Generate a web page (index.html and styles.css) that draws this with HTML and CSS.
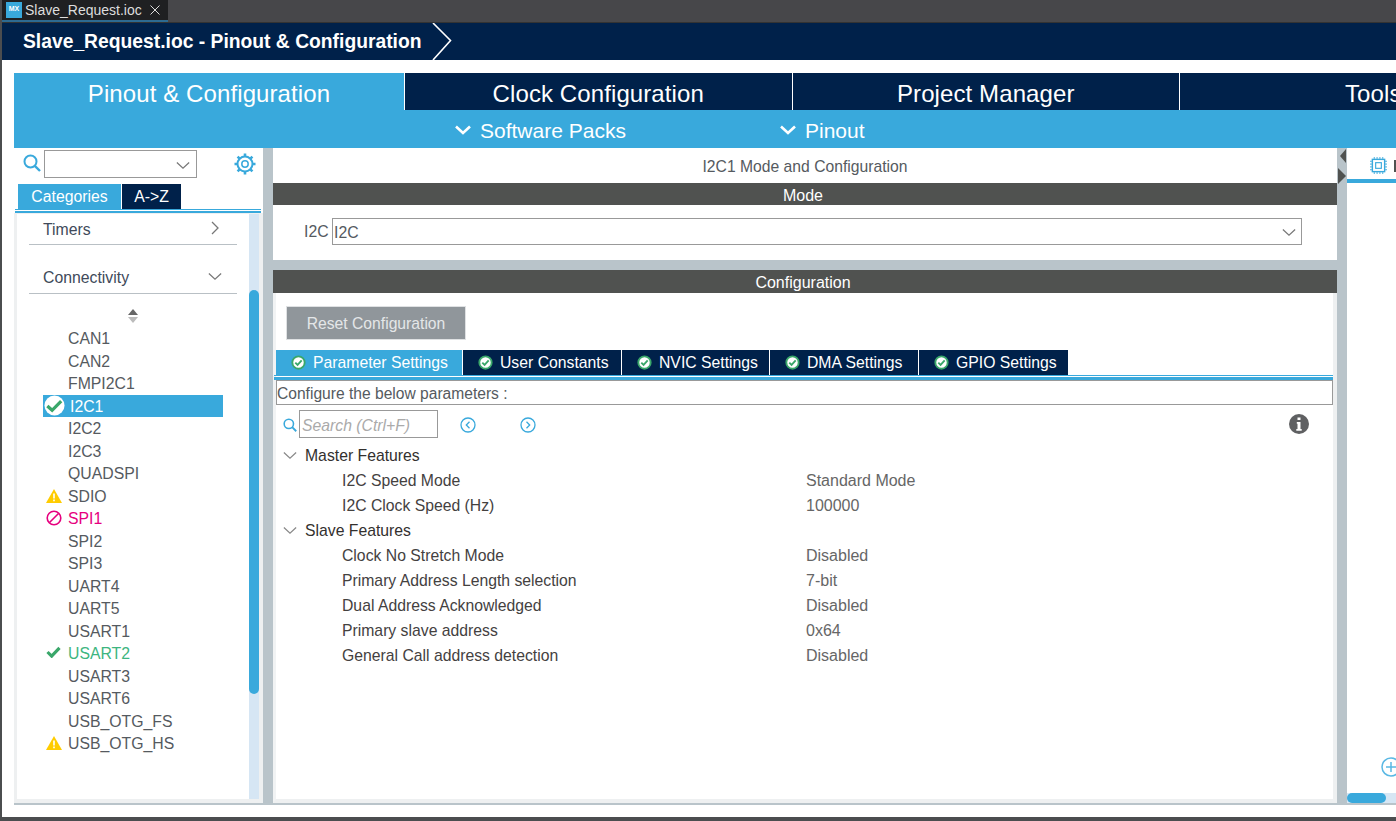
FILE: index.html
```html
<!DOCTYPE html>
<html lang="en">
<head>
    <meta charset="UTF-8">
    <meta name="viewport" content="width=device-width, initial-scale=1.0">
    <title>Slave_Request.ioc - Pinout &amp; Configuration</title>
    <link rel="stylesheet" href="styles.css">
</head>
<body>

    <svg class="defs" width="0" height="0">
        <symbol id="i-ok" viewBox="0 0 16 16">
            <circle cx="8" cy="8" r="6.6" fill="#fff" stroke="#3aa76a" stroke-width="2"/>
            <path d="M4.6 8.2 7 10.6 11.4 5.8" fill="none" stroke="#3aa76a" stroke-width="2"/>
        </symbol>
        <symbol id="i-warn" viewBox="0 0 16 14">
            <path d="M8 0 16 14H0Z" fill="#ffcc00"/>
            <path d="M7.2 4.5h1.6v5H7.2zM7.2 10.6h1.6v1.6H7.2z" fill="#fff"/>
        </symbol>
        <symbol id="i-down" viewBox="0 0 16 10">
            <path d="M1 1.5 8 8 15 1.5" fill="none" stroke="currentColor" stroke-width="1.4"/>
        </symbol>
        <symbol id="i-down-bold" viewBox="0 0 16 10">
            <path d="M1 1.5 8 8 15 1.5" fill="none" stroke="currentColor" stroke-width="2.6"/>
        </symbol>
        <symbol id="i-search" viewBox="0 0 18 18">
            <circle cx="7.5" cy="7.5" r="6" fill="none" stroke="#39a9dc" stroke-width="2"/>
            <path d="M11.8 11.8 17 17" stroke="#39a9dc" stroke-width="2.4"/>
        </symbol>
    </svg>

    <div class="window">
        <div class="editor-tabs">
            <div class="editor-tab">
                <span class="mx-logo">MX</span>
                <span>Slave_Request.ioc</span>
                <svg class="close-icon" viewBox="0 0 10 10"><path d="M0.5 0.5 9.5 9.5M9.5 0.5 0.5 9.5" stroke="#ddd" stroke-width="1"/></svg>
            </div>
        </div>

        <div class="breadcrumb">
            <span class="breadcrumb-text">Slave_Request.ioc - Pinout &amp; Configuration</span>
            <svg class="breadcrumb-arrow" viewBox="0 0 20 37"><path d="M1 0 18.500 17.500 1 37" fill="none" stroke="#fff" stroke-width="1.600"/></svg>
        </div>

        <div class="content">
            <div class="main-tabs">
                <div class="main-tab active">Pinout &amp; Configuration</div>
                <div class="main-tab">Clock Configuration</div>
                <div class="main-tab">Project Manager</div>
                <div class="main-tab">Tools</div>
            </div>

            <div class="sub-menu">
                <div class="sub-item software"><svg class="sub-icon"><use href="#i-down-bold"/></svg>Software Packs</div>
                <div class="sub-item"><svg class="sub-icon"><use href="#i-down-bold"/></svg>Pinout</div>
            </div>

            <div class="workspace">
                <!-- Panneau gauche -->
                <div class="left-panel">
                    <div class="left-search">
                        <svg class="left-search-icon"><use href="#i-search"/></svg>
                        <div class="combo"><svg class="combo-arrow"><use href="#i-down"/></svg></div>
                        <svg class="gear" viewBox="0 0 22 22">
                            <circle cx="11" cy="11" r="7.500" fill="none" stroke="#39a9dc" stroke-width="2"/>
                            <circle cx="11" cy="11" r="3.200" fill="none" stroke="#39a9dc" stroke-width="1.500"/>
                            <path d="M11 0.500v3.500M11 18v3.500M0.500 11h3.500M18 11h3.500M3.600 3.600l2.500 2.500M15.900 15.900l2.500 2.500M18.400 3.600l-2.500 2.500M6.100 15.900l-2.500 2.500" stroke="#39a9dc" stroke-width="2.600"/>
                        </svg>
                    </div>
                    <div class="side-tabs">
                        <div class="side-tab active">Categories</div>
                        <div class="side-tab">A-&gt;Z</div>
                    </div>
                    <div class="side-rule"></div>
                    <div class="left-body">
                        <div class="left-list">
                            <div class="group timers">
                                <span>Timers</span>
                                <svg class="group-arrow" viewBox="0 0 8 14"><path d="M1 1 7 7 1 13" fill="none" stroke="#777" stroke-width="1.300"/></svg>
                            </div>
                            <div class="group connectivity">
                                <span>Connectivity</span>
                                <svg class="group-arrow open"><use href="#i-down"/></svg>
                            </div>
                            <svg class="sort-icon" viewBox="0 0 12 14">
                                <path d="M6 0 11 6H1Z" fill="#666"/>
                                <path d="M1 8H11L6 14Z" fill="#bbb"/>
                            </svg>
                            <div class="peripherals">
                                <div class="periph">CAN1</div>
                                <div class="periph">CAN2</div>
                                <div class="periph">FMPI2C1</div>
                                <div class="periph selected">
                                    <svg class="status ok-big" viewBox="0 0 22 22">
                                        <circle cx="11" cy="11" r="10.500" fill="#fff"/>
                                        <path d="M3.500 11.500 8.500 16 18 6.500" fill="none" stroke="#3aa76a" stroke-width="3.400"/>
                                    </svg>
                                    I2C1
                                </div>
                                <div class="periph">I2C2</div>
                                <div class="periph">I2C3</div>
                                <div class="periph">QUADSPI</div>
                                <div class="periph"><svg class="status warn"><use href="#i-warn"/></svg>SDIO</div>
                                <div class="periph conflict">
                                    <svg class="status block" viewBox="0 0 16 16">
                                        <circle cx="8" cy="8" r="6.800" fill="none" stroke="#e6007e" stroke-width="1.600"/>
                                        <path d="M3.500 12.500 12.500 3.500" stroke="#e6007e" stroke-width="1.600"/>
                                    </svg>
                                    SPI1
                                </div>
                                <div class="periph">SPI2</div>
                                <div class="periph">SPI3</div>
                                <div class="periph">UART4</div>
                                <div class="periph">UART5</div>
                                <div class="periph">USART1</div>
                                <div class="periph enabled">
                                    <svg class="status tick" viewBox="0 0 16 13"><path d="M1.500 6.500 6 11 14.500 2" fill="none" stroke="#3aa76a" stroke-width="3.400"/></svg>
                                    USART2
                                </div>
                                <div class="periph">USART3</div>
                                <div class="periph">USART6</div>
                                <div class="periph">USB_OTG_FS</div>
                                <div class="periph"><svg class="status warn"><use href="#i-warn"/></svg>USB_OTG_HS</div>
                            </div>
                        </div>
                        <div class="v-scroll"><div class="v-thumb"></div></div>
                    </div>
                </div>

                <div class="splitter"></div>

                <!-- Panneau central -->
                <div class="center-panel">
                    <div class="center-title">I2C1 Mode and Configuration</div>
                    <div class="bar">Mode</div>
                    <div class="mode-row">
                        <span class="mode-label">I2C</span>
                        <div class="mode-select">I2C<svg class="mode-arrow"><use href="#i-down"/></svg></div>
                    </div>
                    <div class="h-splitter"></div>
                    <div class="bar config-bar">Configuration</div>
                    <div class="config-body">
                        <div class="reset-btn">Reset Configuration</div>
                        <div class="config-tabs">
                            <div class="config-tab active tab-param"><svg class="tab-ok"><use href="#i-ok"/></svg>Parameter Settings</div>
                            <div class="config-tab tab-user"><svg class="tab-ok"><use href="#i-ok"/></svg>User Constants</div>
                            <div class="config-tab tab-nvic"><svg class="tab-ok"><use href="#i-ok"/></svg>NVIC Settings</div>
                            <div class="config-tab tab-dma"><svg class="tab-ok"><use href="#i-ok"/></svg>DMA Settings</div>
                            <div class="config-tab tab-gpio"><svg class="tab-ok"><use href="#i-ok"/></svg>GPIO Settings</div>
                        </div>
                        <div class="tabs-rule"></div>
                        <div class="hint">Configure the below parameters :</div>
                        <div class="search-row">
                            <svg class="search-icon"><use href="#i-search"/></svg>
                            <div class="search-input">Search (Ctrl+F)</div>
                            <svg class="nav-icon prev" viewBox="0 0 16 16">
                                <circle cx="8" cy="8" r="7" fill="none" stroke="#39a9dc" stroke-width="1.300"/>
                                <path d="M9.500 4.800 6.300 8 9.500 11.200" fill="none" stroke="#39a9dc" stroke-width="1.300"/>
                            </svg>
                            <svg class="nav-icon next" viewBox="0 0 16 16">
                                <circle cx="8" cy="8" r="7" fill="none" stroke="#39a9dc" stroke-width="1.300"/>
                                <path d="M6.500 4.800 9.700 8 6.500 11.200" fill="none" stroke="#39a9dc" stroke-width="1.300"/>
                            </svg>
                            <svg class="info-icon" viewBox="0 0 20 20">
                                <circle cx="10" cy="10" r="10" fill="#5f6062"/>
                                <path d="M8.500 3.500h3v2.600h-3zM7.800 8h3.700v7h1.200v1.800H7.300V15h1.200v-5.200H7.800z" fill="#fff"/>
                            </svg>
                        </div>
                        <div class="tree">
                            <div class="tree-head"><svg class="tree-arrow"><use href="#i-down"/></svg>Master Features</div>
                            <div class="tree-row"><span class="tree-name">I2C Speed Mode</span><span class="tree-value">Standard Mode</span></div>
                            <div class="tree-row"><span class="tree-name">I2C Clock Speed (Hz)</span><span class="tree-value">100000</span></div>
                            <div class="tree-head"><svg class="tree-arrow"><use href="#i-down"/></svg>Slave Features</div>
                            <div class="tree-row"><span class="tree-name">Clock No Stretch Mode</span><span class="tree-value">Disabled</span></div>
                            <div class="tree-row"><span class="tree-name">Primary Address Length selection</span><span class="tree-value">7-bit</span></div>
                            <div class="tree-row"><span class="tree-name">Dual Address Acknowledged</span><span class="tree-value">Disabled</span></div>
                            <div class="tree-row"><span class="tree-name">Primary slave address</span><span class="tree-value">0x64</span></div>
                            <div class="tree-row"><span class="tree-name">General Call address detection</span><span class="tree-value">Disabled</span></div>
                        </div>
                    </div>
                </div>

                <div class="splitter right-splitter">
                    <span class="grip grip-left"></span>
                    <span class="grip grip-right"></span>
                </div>

                <!-- Panneau droit -->
                <div class="right-panel">
                    <div class="right-tab">
                        <svg class="chip-icon" viewBox="0 0 18 18">
                            <rect x="2.500" y="2.500" width="13" height="13" fill="none" stroke="#39a9dc" stroke-width="1.500"/>
                            <rect x="6" y="6" width="6" height="6" fill="none" stroke="#39a9dc" stroke-width="1.200"/>
                            <path d="M4.500 0v2M7.500 0v2M10.500 0v2M13.500 0v2M4.500 16v2M7.500 16v2M10.500 16v2M13.500 16v2M0 4.500h2M0 7.500h2M0 10.500h2M0 13.500h2M16 4.500h2M16 7.500h2M16 10.500h2M16 13.500h2" stroke="#39a9dc" stroke-width="1"/>
                        </svg>
                        <span class="right-tab-cut"></span>
                    </div>
                    <div class="right-body">
                        <svg class="zoom-icon" viewBox="0 0 20 20">
                            <circle cx="10" cy="10" r="9" fill="#fff" stroke="#5ab8e4" stroke-width="1.500"/>
                            <path d="M10 5v10M5 10h10" stroke="#5ab8e4" stroke-width="1.500"/>
                        </svg>
                    </div>
                    <div class="h-scroll"><div class="h-thumb"></div></div>
                </div>
            </div>
        </div>
    </div>

</body>
</html>
```

FILE: styles.css
```css
html, body {
    margin: 0;
    height: 100%;
    overflow: hidden;
}
body {
    font-family: "Liberation Sans", Arial, sans-serif;
    color: #555a60;
    background-color: #4b4d4f;
}
.defs {
    position: absolute;
}
.window {
    width: 1396px;
    height: 821px;
    padding: 0 0 4px 2px;
    box-sizing: border-box;
    display: flex;
    flex-direction: column;
    overflow: hidden;
}

/* Onglet de l'editeur */
.editor-tabs {
    height: 23px;
    flex: none;
    background-color: #47474a;
    border-bottom: 1px solid #333;
    box-sizing: border-box;
}
.editor-tab {
    width: 166px;
    height: 22px;
    box-sizing: border-box;
    background-color: #1f2022;
    border-bottom: 2px solid #2d6b92;
    color: #ddd;
    font-size: 14px;
    display: flex;
    align-items: center;
    padding-left: 4px;
}
.mx-logo {
    width: 16px;
    height: 16px;
    margin-right: 3px;
    background-color: #39a9dc;
    color: #fff;
    font-size: 7px;
    font-weight: bold;
    text-align: center;
    line-height: 14px;
}
.close-icon {
    width: 10px;
    height: 10px;
    margin-left: 8px;
}

.breadcrumb {
    height: 37px;
    flex: none;
    background-color: #00214a;
    display: flex;
    align-items: center;
    padding-left: 21px;
    color: #fff;
}
.breadcrumb-text {
    font-size: 19.3px;
    font-weight: bold;
    width: 409px;
    white-space: nowrap;
}
.breadcrumb-arrow {
    width: 20px;
    height: 37px;
}

.content {
    flex: 1;
    min-height: 0;
    background-color: #fff;
    padding: 13px 0 12px 12px;
    display: flex;
    flex-direction: column;
}

/* Onglets principaux */
.main-tabs {
    height: 37px;
    flex: none;
    display: flex;
}
.main-tab {
    width: 386.5px;
    flex: none;
    margin-right: 1px;
    background-color: #00214a;
    color: #fff;
    font-size: 24px;
    letter-spacing: 0.1px;
    text-align: center;
    line-height: 42px;
}
.main-tab.active {
    width: 390px;
    background-color: #39a9dc;
}

.sub-menu {
    height: 38px;
    flex: none;
    box-sizing: border-box;
    padding-top: 4px;
    background-color: #39a9dc;
    color: #fff;
    font-size: 21px;
    display: flex;
    align-items: center;
    padding-left: 441px;
}
.sub-item {
    display: flex;
    align-items: center;
}
.sub-item.software {
    width: 325px;
}
.sub-icon {
    width: 16px;
    height: 10px;
    margin-right: 9px;
    margin-top: -3px;
}

.workspace {
    flex: 1;
    min-height: 0;
    display: flex;
    border-bottom: 2px solid #b9c4ca;
}
.splitter {
    width: 10px;
    flex: none;
    background-color: #b9c4ca;
}

/* Panneau gauche */
.left-panel {
    width: 249px;
    flex: none;
    display: flex;
    flex-direction: column;
    background-color: #fff;
}
.left-search {
    height: 30px;
    flex: none;
    padding: 2px 0 0 9px;
    box-sizing: border-box;
    display: flex;
    align-items: flex-start;
}
.left-search-icon {
    width: 18px;
    height: 18px;
    margin-top: 4px;
}
.combo {
    width: 153px;
    height: 28px;
    margin-left: 3px;
    box-sizing: border-box;
    border: 1px solid #999;
    position: relative;
}
.combo-arrow {
    position: absolute;
    right: 6px;
    top: 10px;
    width: 14px;
    height: 9px;
    color: #777;
}
.gear {
    width: 22px;
    height: 22px;
    margin: 3px 0 0 37px;
}
.side-tabs {
    height: 31px;
    flex: none;
    box-sizing: border-box;
    padding: 6px 0 0 4px;
    display: flex;
    gap: 1px;
    color: #fff;
    font-size: 15.8px;
}
.side-tab {
    width: 59px;
    height: 25px;
    line-height: 25px;
    text-align: center;
    background-color: #00214a;
}
.side-tab.active {
    width: 103px;
    background-color: #39a9dc;
}
.side-rule {
    height: 1px;
    flex: none;
    margin: 0 2px 0 1px;
    border-top: 1px solid #39a9dc;
    border-bottom: 2px solid #39a9dc;
}
.left-body {
    flex: 1;
    min-height: 0;
    display: flex;
    background-color: #eef0f1;
    padding: 1px 4px 4px 3px;
}
.left-list {
    width: 232px;
    flex: none;
    background-color: #fff;
    padding-left: 12px;
    box-sizing: border-box;
}
.group {
    width: 208px;
    box-sizing: border-box;
    border-bottom: 1px solid #b9c0c5;
    padding-left: 14px;
    color: #404a5a;
    font-size: 15.8px;
    display: flex;
    justify-content: space-between;
    align-items: center;
}
.group.timers {
    height: 31px;
    padding-top: 2px;
    margin-bottom: 17px;
}
.group.connectivity {
    height: 32px;
    padding-top: 1px;
}
.group-arrow {
    width: 8px;
    height: 14px;
    margin-right: 18px;
    margin-top: -4px;
}
.group-arrow.open {
    width: 14px;
    height: 9px;
    margin-right: 15px;
    color: #777;
}
.sort-icon {
    display: block;
    width: 12px;
    height: 14px;
    margin: 15px 0 0 98px;
}
.peripherals {
    margin-top: 4px;
}
.periph {
    height: 22.5px;
    line-height: 24.5px;
    font-size: 15.8px;
    padding-left: 39px;
    position: relative;
}
.periph.selected {
    width: 180px;
    margin-left: 14px;
    padding-left: 27px;
    box-sizing: border-box;
    background-color: #39a9dc;
    color: #fff;
}
.periph.conflict {
    color: #e6007e;
}
.periph.enabled {
    color: #3db580;
}
.status {
    position: absolute;
}
.status.ok-big {
    left: 1px;
    top: 0;
    width: 21px;
    height: 21px;
}
.status.warn {
    left: 17px;
    top: 4px;
    width: 16px;
    height: 14px;
}
.status.block {
    left: 17px;
    top: 3px;
    width: 16px;
    height: 16px;
}
.status.tick {
    left: 17px;
    top: 4px;
    width: 15px;
    height: 12px;
}
.v-scroll {
    width: 10px;
    flex: none;
    background-color: #d6e6f4;
    padding-top: 76px;
    box-sizing: border-box;
}
.v-thumb {
    height: 404px;
    background-color: #39a9dc;
    border-radius: 5px;
}

/* Panneau central */
.center-panel {
    width: 1064px;
    flex: none;
    display: flex;
    flex-direction: column;
    background-color: #fff;
}
.center-title {
    height: 35px;
    line-height: 37px;
    flex: none;
    text-align: center;
    font-size: 15.7px;
}
.bar {
    height: 22px;
    line-height: 25px;
    flex: none;
    box-sizing: border-box;
    padding-right: 4px;
    background-color: #505250;
    color: #fff;
    text-align: center;
    font-size: 16px;
}
.config-bar {
    height: 23px;
}
.mode-row {
    height: 55px;
    flex: none;
    display: flex;
    align-items: flex-start;
    padding: 13px 0 0 31px;
    box-sizing: border-box;
    font-size: 15.8px;
}
.mode-label {
    width: 28px;
    line-height: 28px;
}
.mode-select {
    width: 970px;
    height: 27px;
    line-height: 27px;
    box-sizing: border-box;
    border: 1px solid #999;
    padding-left: 1px;
    position: relative;
}
.mode-arrow {
    position: absolute;
    right: 5px;
    top: 9px;
    width: 14px;
    height: 9px;
    color: #777;
}
.h-splitter {
    height: 10px;
    flex: none;
    background-color: #b9c4ca;
}
.config-body {
    flex: 1;
    min-height: 0;
    background-color: #fff;
    border-left: 3px solid #f1f3f4;
    border-right: 4px solid #eef0f1;
    border-bottom: 4px solid #eef0f1;
    padding-top: 14px;
    font-size: 15.75px;
}
.reset-btn {
    width: 178px;
    height: 32px;
    line-height: 33px;
    margin-left: 11px;
    background-color: #90969b;
    box-shadow: 0 0 0 1px #dfe1e3;
    color: #e4e6e8;
    font-size: 15.7px;
    text-align: center;
}
.config-tabs {
    display: flex;
    margin-top: 11px;
    gap: 1px;
    height: 25px;
    color: #fff;
}
.config-tab {
    height: 25px;
    line-height: 26px;
    background-color: #00214a;
    box-sizing: border-box;
    padding-left: 15px;
    display: flex;
    align-items: center;
}
.config-tab.active {
    background-color: #39a9dc;
}
.tab-param { width: 186px; }
.tab-user { width: 158px; }
.tab-nvic { width: 147px; }
.tab-dma { width: 148px; }
.tab-gpio { width: 149px; }
.tab-ok {
    width: 15px;
    height: 15px;
    margin-right: 7px;
}
.tabs-rule {
    height: 1px;
    margin-left: -2px;
    border-top: 1px solid #39a9dc;
    border-bottom: 3px solid #39a9dc;
}
.hint {
    height: 25px;
    line-height: 25px;
    width: 1057px;
    box-sizing: border-box;
    border: 1px solid #999;
    font-size: 15.6px;
}
.search-row {
    height: 28px;
    margin-top: 5px;
    display: flex;
    align-items: center;
    position: relative;
    padding-left: 7px;
}
.search-icon {
    width: 14px;
    height: 14px;
    margin-top: 1px;
}
.search-input {
    width: 139px;
    height: 28px;
    line-height: 30px;
    margin-left: 2px;
    box-sizing: border-box;
    border: 1px solid #999;
    padding-left: 2px;
    color: #aaa;
    font-style: italic;
}
.nav-icon {
    width: 16px;
    height: 16px;
    margin-top: 1px;
}
.nav-icon.prev {
    margin-left: 22px;
}
.nav-icon.next {
    margin-left: 44px;
}
.info-icon {
    width: 20px;
    height: 20px;
    margin-left: 753px;
}
.tree {
    margin-top: 5px;
}
.tree-head {
    height: 25px;
    line-height: 25px;
    color: #33302e;
    display: flex;
    align-items: center;
    padding-left: 7px;
}
.tree-arrow {
    width: 14px;
    height: 9px;
    margin-right: 8px;
    color: #888;
}
.tree-row {
    height: 25px;
    line-height: 25px;
    display: flex;
}
.tree-name {
    width: 464px;
    margin-left: 66px;
    flex: none;
    color: #44413f;
}
.tree-value {
    color: #666;
    font-size: 16px;
}

.right-splitter {
    position: relative;
}
.grip {
    position: absolute;
    width: 0;
    height: 0;
}
.grip-left {
    left: 3px;
    top: 1px;
    border-top: 7.5px solid transparent;
    border-bottom: 7.5px solid transparent;
    border-right: 6px solid #505250;
}
.grip-right {
    left: 1px;
    top: 20px;
    border-top: 8.5px solid transparent;
    border-bottom: 8.5px solid transparent;
    border-left: 8px solid #505250;
}

/* Panneau droit */
.right-panel {
    flex: 1;
    min-width: 0;
    display: flex;
    flex-direction: column;
    background-color: #fff;
    overflow: hidden;
}
.right-tab {
    height: 35px;
    flex: none;
    box-sizing: border-box;
    border-bottom: 4px solid #39a9dc;
    padding: 9px 0 0 23px;
    display: flex;
    gap: 7px;
}
.chip-icon {
    width: 17px;
    height: 17px;
    flex: none;
}
.right-tab-cut {
    width: 6px;
    height: 12px;
    flex: none;
    margin-top: 3px;
    background-color: #505250;
}
.right-body {
    flex: 1;
    min-height: 0;
    position: relative;
}
.zoom-icon {
    position: absolute;
    left: 34px;
    bottom: 16px;
    width: 20px;
    height: 20px;
}
.h-scroll {
    height: 10px;
    flex: none;
    background-color: #d6e6f4;
}
.h-thumb {
    width: 39px;
    height: 10px;
    background-color: #39a9dc;
    border-radius: 5px;
}
```
